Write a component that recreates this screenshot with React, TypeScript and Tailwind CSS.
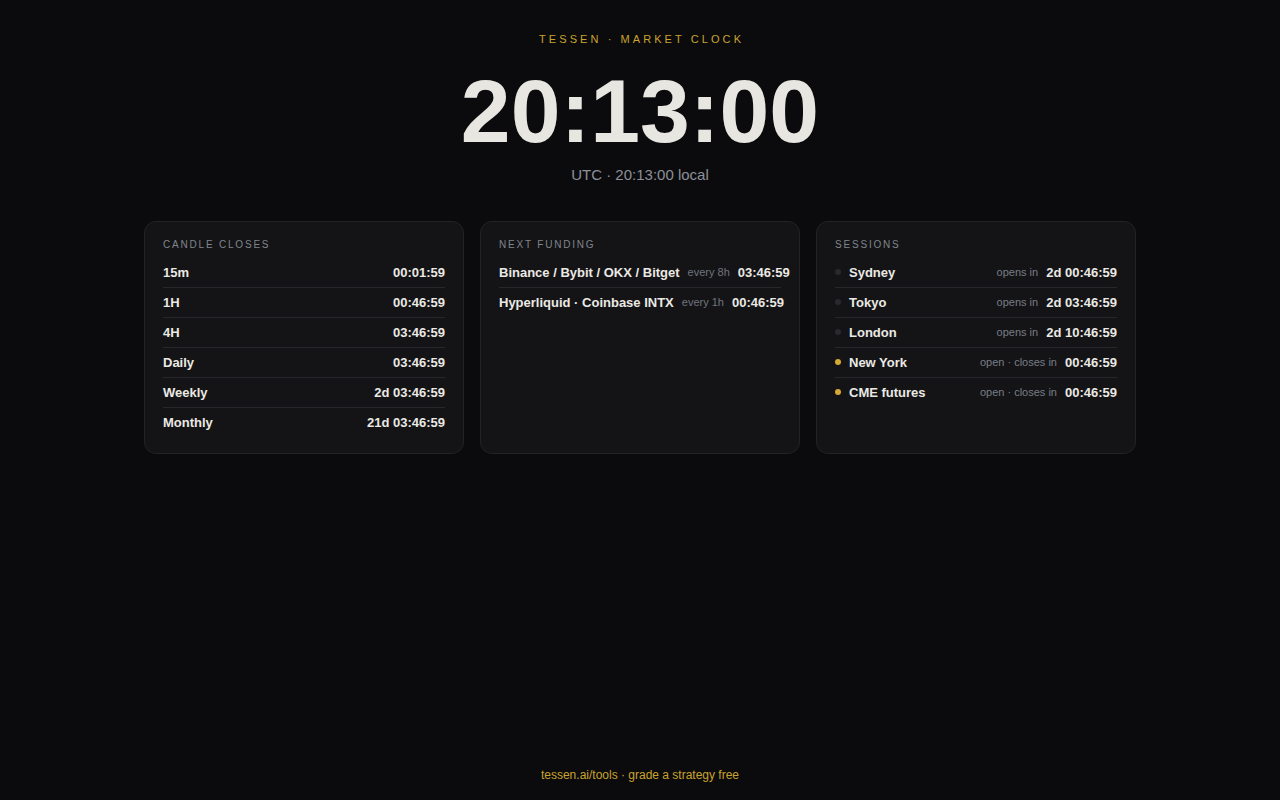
import React from "react";

const candles: [string, string][] = [
  ["15m", "00:01:59"],
  ["1H", "00:46:59"],
  ["4H", "03:46:59"],
  ["Daily", "03:46:59"],
  ["Weekly", "2d 03:46:59"],
  ["Monthly", "21d 03:46:59"],
];

const funding: [string, string, string][] = [
  ["Binance / Bybit / OKX / Bitget", "every 8h", "03:46:59"],
  ["Hyperliquid · Coinbase INTX", "every 1h", "00:46:59"],
];

const sessions: [string, boolean, string, string][] = [
  ["Sydney", false, "opens in", "2d 00:46:59"],
  ["Tokyo", false, "opens in", "2d 03:46:59"],
  ["London", false, "opens in", "2d 10:46:59"],
  ["New York", true, "open · closes in", "00:46:59"],
  ["CME futures", true, "open · closes in", "00:46:59"],
];

function Card({ title, children }: { title: string; children: React.ReactNode }) {
  return (
    <div className="rounded-[12px] border border-[#232326] bg-[#141416] px-[18px] pt-[16px] pb-[16px]">
      <div className="text-[10px] leading-[14px] tracking-[0.18em] text-[#80858d] uppercase mb-[6px]">
        {title}
      </div>
      <div>{children}</div>
    </div>
  );
}

function Row({ first, children }: { first: boolean; children: React.ReactNode }) {
  return (
    <div
      className={
        "flex items-center justify-between gap-2 py-[7px] text-[13px] leading-[15px] " +
        (first ? "" : "border-t border-[#26272a]")
      }
    >
      {children}
    </div>
  );
}

export default function App() {
  return (
    <div
      className="min-h-screen bg-[#0b0b0d] flex flex-col items-center text-[#ebe9e4]"
      style={{ fontFamily: '"Liberation Sans", Arial, sans-serif' }}
    >
      <div className="pt-[31px] text-[11px] leading-[16px] tracking-[0.28em] text-[#c9a32e] pl-[0.28em]">
        TESSEN · MARKET CLOCK
      </div>
      <div className="mt-[20px] text-[89.5px] leading-none font-bold text-[#e8e6e1] tabular-nums">
        20:13:00
      </div>
      <div className="mt-[8px] text-[15px] leading-[20px] text-[#8b909a]">
        UTC · 20:13:00 local
      </div>

      <div className="mt-[36px] grid grid-cols-3 gap-4 w-[992px]">
        <Card title="Candle closes">
          {candles.map(([k, v], i) => (
            <Row key={k} first={i === 0}>
              <span className="font-bold text-[#ebe9e4]">{k}</span>
              <span className="font-bold tabular-nums text-[#ebe9e4]">{v}</span>
            </Row>
          ))}
        </Card>
        <Card title="Next funding">
          {funding.map(([n, e, t], i) => (
            <Row key={n} first={i === 0}>
              <span className="font-bold whitespace-nowrap shrink-0">{n}</span>
              <span className="flex items-center gap-2 whitespace-nowrap shrink-0">
                <span className="text-[11px] text-[#70757e]">{e}</span>
                <span className="font-bold tabular-nums">{t}</span>
              </span>
            </Row>
          ))}
        </Card>
        <Card title="Sessions">
          {sessions.map(([n, open, s, t], i) => (
            <Row key={n} first={i === 0}>
              <span className="flex items-center gap-2 whitespace-nowrap">
                <span
                  className={
                    "inline-block w-[6px] h-[6px] rounded-full " +
                    (open ? "bg-[#d6aa32]" : "bg-[#2a2a2e]")
                  }
                />
                <span className="font-bold">{n}</span>
              </span>
              <span className="flex items-center gap-2 whitespace-nowrap">
                <span className="text-[11px] text-[#787d86]">{s}</span>
                <span className="font-bold tabular-nums">{t}</span>
              </span>
            </Row>
          ))}
        </Card>
      </div>

      <div className="mt-auto pb-[17px] text-[12px] leading-[16px] text-[#c9a32e]">
        tessen.ai/tools · grade a strategy free
      </div>
    </div>
  );
}
